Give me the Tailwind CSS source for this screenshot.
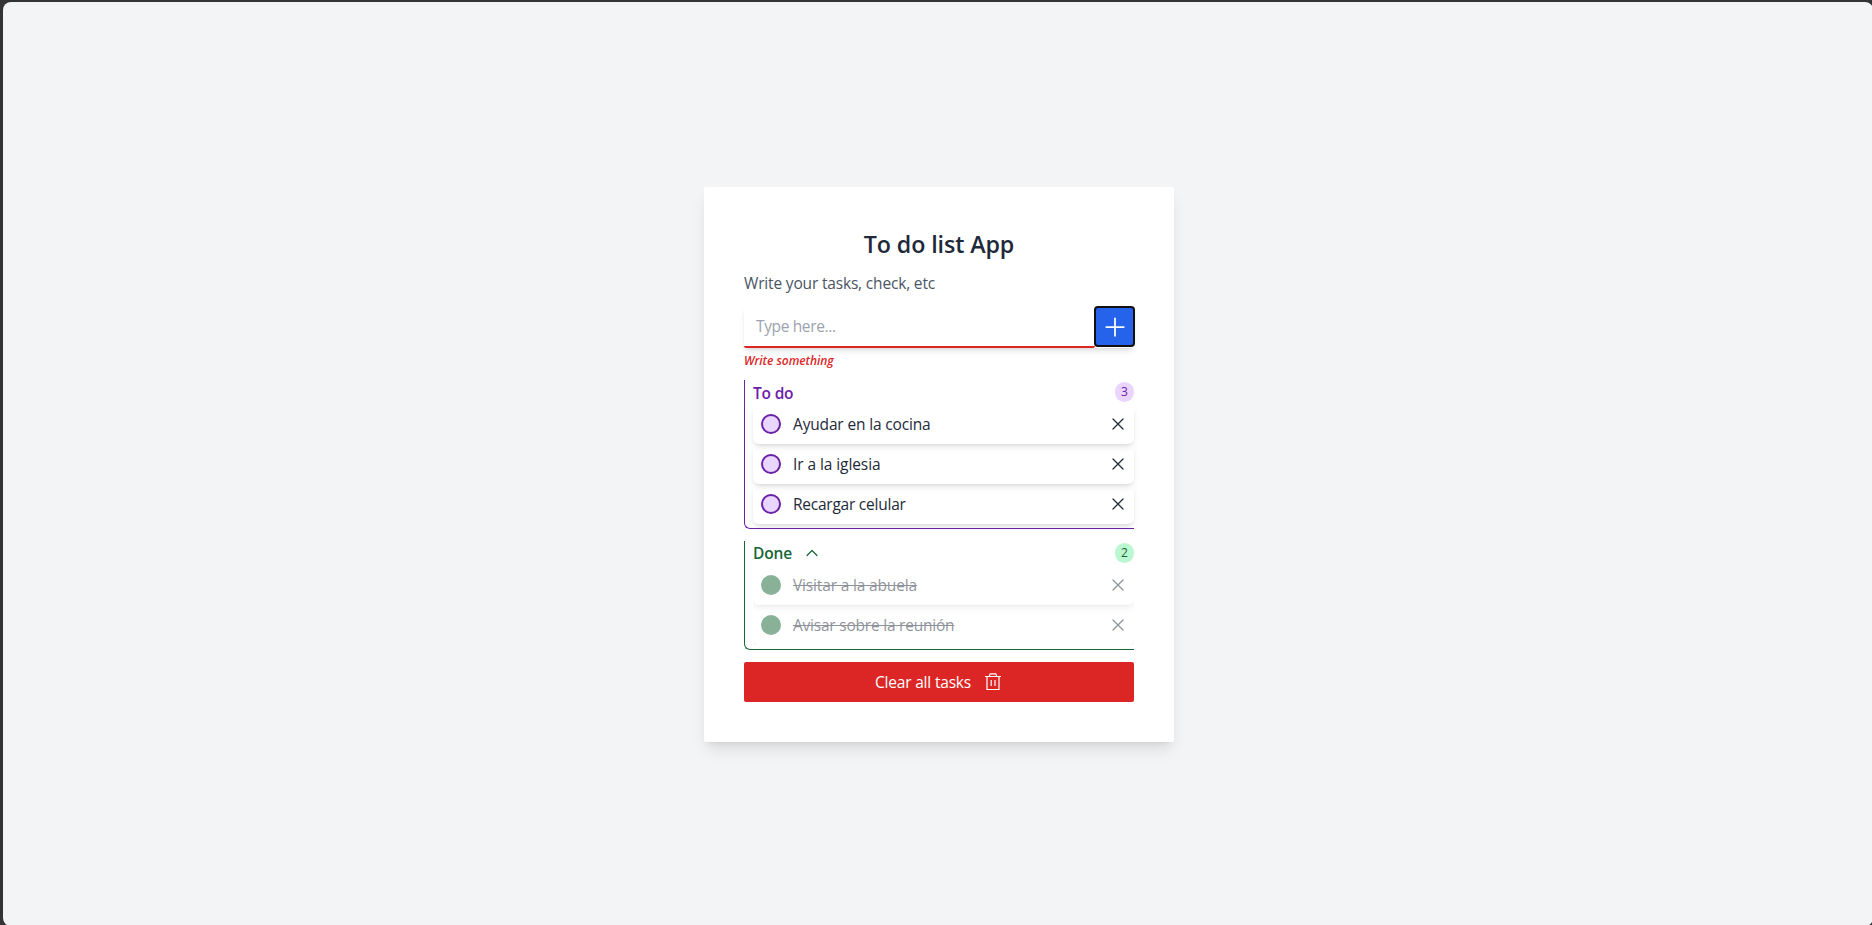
<!DOCTYPE html>
<html lang="en">
<head>
<meta charset="UTF-8">
<title>To do list App</title>
<script src="https://cdn.jsdelivr.net/npm/@tailwindcss/browser@4"></script>
</head>
<body class="h-screen overflow-hidden bg-[#333335] pt-[2px] pl-[3px] font-['Open_Sans','Noto_Sans',sans-serif] text-[15.5px] leading-6 text-gray-800">
<svg class="hidden">
  <symbol id="x" viewBox="0 0 24 24"><path d="M6 18L18 6M6 6l12 12" fill="none" stroke="currentColor" stroke-width="1.5" stroke-linecap="round" stroke-linejoin="round"/></symbol>
</svg>
<div class="h-[924px] w-[1870px] rounded-lg bg-[#f3f4f6] pt-[185px] pl-[701px]">
  <main class="flex h-[555px] w-[470px] flex-col gap-3 rounded-xs bg-white p-10 shadow-lg">
    <h1 class="h-8 pt-px text-center text-[23.25px] leading-8 font-semibold tracking-[-0.1px]">To do list App</h1>
    <p class="tracking-[-0.17px] text-gray-600">Write your tasks, check, etc</p>
    <div>
      <form class="flex h-[41px] rounded-xs shadow-md">
        <input type="text" placeholder="Type here..." class="h-[41px] min-w-0 flex-1 rounded-xs border-b-2 border-[#dc2626] px-3 pb-[2px] tracking-[-0.36px] outline-none placeholder:text-[#9ca3af]">
        <button type="button" class="flex size-[39px] items-center justify-center rounded-[3px] bg-[#2563eb] text-white outline-2 -outline-offset-1 outline-[#101010]">
          <svg class="size-7 shrink-0" viewBox="0 0 24 24" fill="none" stroke="currentColor" stroke-width="1.5" stroke-linecap="round"><path d="M12 4.5v15m7.5-7.5h-15"/></svg>
        </button>
      </form>
      <p class="h-5 pt-[5px] text-xs leading-4 font-semibold tracking-[-0.03px] text-[#dc2626] italic">Write something</p>
    </div>

    <section class="rounded-bl-md border-b border-l border-[#6b21a8] pb-1 pl-2">
      <header class="flex h-6 items-center justify-between text-[#6b21a8]">
        <h2 class="pt-px font-semibold tracking-[-0.2px]">To do</h2>
        <span class="flex h-5 w-[19px] items-center justify-center rounded-full bg-[#e9d5ff] text-xs font-medium">3</span>
      </header>
      <ul>
        <li class="flex h-10 items-center rounded-md px-2 shadow-md">
          <span class="mr-3 size-5 rounded-full border-2 border-[#6b21a8] bg-[#e9d5ff]"></span>
          <span class="flex-1 tracking-[-0.16px]">Ayudar en la cocina</span>
          <svg class="-mr-0.5 size-5"><use href="#x"/></svg>
        </li>
        <li class="flex h-10 items-center rounded-md px-2 shadow-md">
          <span class="mr-3 size-5 rounded-full border-2 border-[#6b21a8] bg-[#e9d5ff]"></span>
          <span class="flex-1 tracking-[-0.08px]">Ir a la iglesia</span>
          <svg class="-mr-0.5 size-5"><use href="#x"/></svg>
        </li>
        <li class="flex h-10 items-center rounded-md px-2 shadow-md">
          <span class="mr-3 size-5 rounded-full border-2 border-[#6b21a8] bg-[#e9d5ff]"></span>
          <span class="flex-1 tracking-[-0.24px]">Recargar celular</span>
          <svg class="-mr-0.5 size-5"><use href="#x"/></svg>
        </li>
      </ul>
    </section>

    <section class="rounded-bl-md border-b border-l border-[#166534] pb-1 pl-2">
      <header class="flex h-6 items-center text-[#166534]">
        <h2 class="w-[39px] font-semibold tracking-[-0.15px]">Done</h2>
        <svg class="ml-3 size-4" viewBox="0 0 24 24" fill="none" stroke="currentColor" stroke-width="1.8" stroke-linecap="round" stroke-linejoin="round"><path d="M4.5 15.75l7.5-7.5 7.5 7.5"/></svg>
        <span class="ml-auto flex h-5 w-[19px] items-center justify-center rounded-full bg-[#bbf7d0] text-xs font-medium">2</span>
      </header>
      <ul class="overflow-hidden">
        <li class="flex h-10 items-center rounded-md px-2 opacity-50 shadow-md">
          <span class="mr-3 size-5 rounded-full bg-[#166534]"></span>
          <span class="flex-1 tracking-[-0.16px]"><s>Visitar a la abuela</s></span>
          <svg class="-mr-0.5 size-5"><use href="#x"/></svg>
        </li>
        <li class="flex h-10 items-center rounded-md px-2 opacity-50 shadow-md">
          <span class="mr-3 size-5 rounded-full bg-[#166534]"></span>
          <span class="flex-1 tracking-[-0.22px]"><s>Avisar sobre la reunión</s></span>
          <svg class="-mr-0.5 size-5"><use href="#x"/></svg>
        </li>
      </ul>
    </section>

    <button type="button" class="flex h-10 items-center justify-center rounded-xs bg-[#dc2626] text-white">
      <span class="tracking-[-0.19px]">Clear all tasks</span>
      <svg class="ml-3 size-5" viewBox="0 0 20 20" fill="none" stroke="currentColor" stroke-width="1.2"><path d="M2 4.5h16M6.3 4.2l.9-2.4h5.6l.9 2.4M4 4.5v13h12v-13M8.2 8v6M12 8v6"/></svg>
    </button>
  </main>
</div>
</body>
</html>
